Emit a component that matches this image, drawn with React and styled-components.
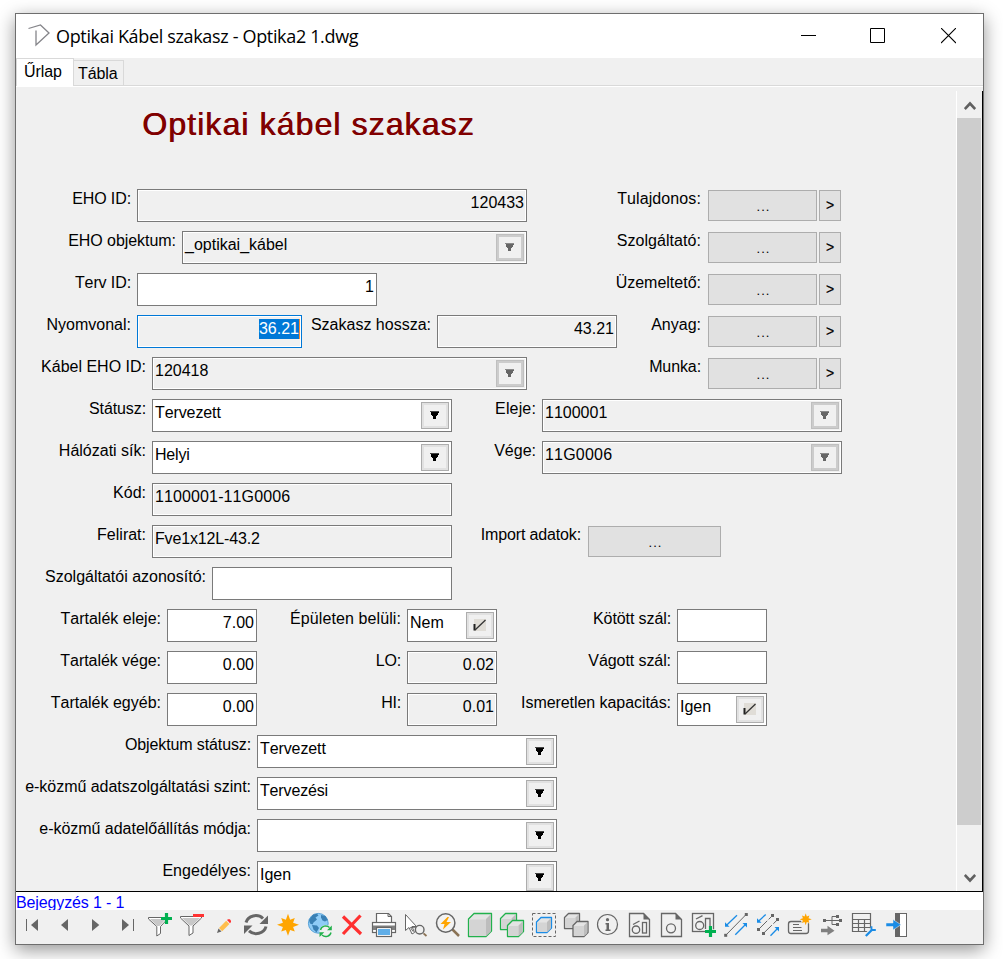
import React from 'react';
import styled, { createGlobalStyle, css } from 'styled-components';

const GlobalStyle = createGlobalStyle`
    * {
        box-sizing: border-box;
    }
    body {
        margin: 0;
        background: #fff;
        font-family: "Liberation Sans", Arial, sans-serif;
        font-size: 16px;
        font-kerning: none;
        color: #000;
        overflow: hidden;
    }
`;

const Desktop = styled.div`
    width: 1003px;
    height: 959px;
    padding: 13px 0 0 15px;
    overflow: hidden;
`;

const Window = styled.div`
    display: flex;
    flex-direction: column;
    width: 969px;
    height: 932px;
    border: 1px solid #6e6e6e;
    background: #f0f0f0;
    box-shadow: 0 5px 17px rgba(0, 0, 0, 0.42);
`;

const TitleBar = styled.div`
    display: flex;
    align-items: center;
    height: 44px;
    flex: none;
    padding-left: 11px;
    background: #fff;
`;

const WindowTitle = styled.div`
    flex: 1;
    margin-left: 5px;
    font-family: "Open Sans", "Noto Sans", sans-serif;
    font-size: 18px;
    line-height: 24px;
    letter-spacing: -0.34px;
    white-space: nowrap;
`;

const WindowButton = styled.div`
    display: flex;
    align-items: center;
    justify-content: center;
    width: 70px;
    height: 44px;
`;

const TabStrip = styled.div`
    display: flex;
    align-items: flex-end;
    height: 27px;
    flex: none;
`;

const Tab = styled.div`
    height: ${p => (p.$active ? 28 : 25)}px;
    width: ${p => (p.$active ? 58 : 50)}px;
    margin-bottom: ${p => (p.$active ? -1 : 0)}px;
    padding: ${p => (p.$active ? '4px 0 0 7px' : '4px 0 0 4px')};
    border: 1px solid #d9d9d9;
    border-bottom: 0;
    border-left-width: ${p => (p.$active ? 1 : 0)}px;
    background: ${p => (p.$active ? '#fff' : '#f0f0f0')};
    line-height: 18px;
    letter-spacing: -0.1px;
    z-index: ${p => (p.$active ? 1 : 0)};
    white-space: nowrap;
`;

const Panel = styled.div`
    display: flex;
    height: 807px;
    flex: none;
    border-top: 1px solid #d9d9d9;
    border-bottom: 1px solid #000;
    box-shadow: inset 0 1px 0 #fff;
    overflow: hidden;
`;

const Form = styled.div`
    width: 940px;
    height: 805px;
    padding-top: 17px;
    overflow: hidden;
`;

const Heading = styled.div`
    height: 86px;
    padding-left: 126px;
    font-size: 32px;
    line-height: 42px;
    letter-spacing: 1.1px;
    color: #800000;
    text-shadow: 0.7px 0 0 #800000;
`;

const Row = styled.div`
    display: flex;
    height: 33px;
    margin-bottom: 9px;
`;

const Label = styled.div`
    width: ${p => p.$w}px;
    flex: none;
    padding-top: 1px;
    padding-right: ${p => p.$pad || 6}px;
    line-height: 18px;
    letter-spacing: ${p => p.$track || 0}px;
    text-align: right;
    white-space: nowrap;
`;

const Box = styled.div`
    display: flex;
    justify-content: space-between;
    width: ${p => p.$w}px;
    height: 33px;
    flex: none;
    padding: 2px 2px 0 1px;
    border: 1px solid ${p => (p.$focused ? '#0078d7' : '#7a7a7a')};
    background: ${p => (p.$readOnly ? '#f0f0f0' : '#fff')};
    box-shadow: inset 0 0 0 1px #fff;
`;

const Value = styled.div`
    flex: 1;
    padding: 2px ${p => (p.$right ? 0 : 1)}px 0 1px;
    line-height: 18px;
    text-align: ${p => (p.$right ? 'right' : 'left')};
    letter-spacing: ${p => p.$track || 0}px;
    white-space: nowrap;
`;

const Selection = styled.span`
    display: inline-block;
    height: 20px;
    margin-top: -1px;
    margin-right: -1px;
    padding-top: 1px;
    border-right: 1px solid #ff8728;
    background: #0078d7;
    color: #fff;
`;

const FieldButton = styled.div`
    display: flex;
    align-items: center;
    justify-content: center;
    width: 28px;
    height: 27px;
    padding-bottom: 1px;
    border: 1px solid #adadad;
    box-shadow: inset 0 0 0 2px #e1e1e1;
    background: #f0f0f0;
    ${p => p.$disabled && css`
        border-color: #bfbfbf;
        box-shadow: inset 0 0 0 2px #cccccc;
    `}
`;

const PushButton = styled.div`
    width: ${p => p.$w}px;
    height: 31px;
    flex: none;
    margin-top: 1px;
    padding-left: 2px;
    border: 1px solid #adadad;
    background: #e1e1e1;
    font-size: 13px;
    line-height: 32px;
    letter-spacing: 1px;
    text-align: center;
`;

const GoButton = styled(PushButton)`
    margin-left: 2px;
    padding-left: 0;
    font-size: 14px;
    line-height: 29px;
    letter-spacing: 0;
    -webkit-text-stroke: 0.2px #000;
`;

const ScrollBar = styled.div`
    display: flex;
    flex-direction: column;
    align-items: flex-start;
    width: 27px;
    height: 800px;
    margin-top: 5px;
    border-left: 1px solid #fff;
    border-right: 1px solid #000;
`;

const ScrollArrow = styled.div`
    display: flex;
    align-items: center;
    justify-content: center;
    width: 25px;
    height: 27px;
    flex: none;
    padding-top: 2px;
`;

const ScrollThumb = styled.div`
    width: 24px;
    height: 707px;
    margin-bottom: 38px;
    background: #cdcdcd;
`;

const StatusLine = styled.div`
    height: 18px;
    flex: none;
    overflow: hidden;
    background: #fff;
    color: #0000ff;
    line-height: 21px;
    letter-spacing: -0.13px;
    white-space: nowrap;
`;

const Toolbar = styled.div`
    display: flex;
    height: 34px;
    flex: none;
`;

const ToolIcon = styled.svg`
    width: 32px;
    height: 34px;
    flex: none;
    fill: none;
    stroke: #666;
    stroke-width: 1;
`;

const rows = [
    [
        { label: 'EHO ID:', lw: 121, w: 390, value: '120433', right: true, ro: true, track: -0.1 },
        { label: 'Tulajdonos:', lw: 181, link: true, track: 0.1 },
    ],
    [
        { label: 'EHO objektum:', lw: 166, w: 345, value: '_optikai_kábel', ro: true, button: 'arrow', track: -0.05 },
        { label: 'Szolgáltató:', lw: 181, link: true, track: 0.05 },
    ],
    [
        { label: 'Terv ID:', lw: 121, w: 240, value: '1', right: true, track: -0.1 },
        { label: 'Üzemeltető:', lw: 331, link: true },
    ],
    [
        { label: 'Nyomvonal:', lw: 121, w: 165, value: '36.21', right: true, ro: true, focused: true },
        { label: 'Szakasz hossza:', lw: 135, w: 180, value: '43.21', right: true, ro: true },
        { label: 'Anyag:', lw: 91, link: true },
    ],
    [
        { label: 'Kábel EHO ID:', lw: 136, w: 375, value: '120418', ro: true, button: 'arrow' },
        { label: 'Munka:', lw: 181, link: true, track: -0.1 },
    ],
    [
        { label: 'Státusz:', lw: 136, w: 300, value: 'Tervezett', button: 'arrow', track: -0.1, vtrack: -0.1 },
        { label: 'Eleje:', lw: 90, w: 300, value: '1100001', ro: true, button: 'arrow', track: 0.15 },
    ],
    [
        { label: 'Hálózati sík:', lw: 136, w: 300, value: 'Helyi', button: 'arrow', vtrack: -0.2 },
        { label: 'Vége:', lw: 90, w: 300, value: '11G0006', ro: true, button: 'arrow', vtrack: 0.2 },
    ],
    [{ label: 'Kód:', lw: 136, w: 300, value: '1100001-11G0006', ro: true, vtrack: 0.12 }],
    [
        { label: 'Felirat:', lw: 136, w: 300, value: 'Fve1x12L-43.2', ro: true, vtrack: -0.15 },
        { label: 'Import adatok:', lw: 136, push: 133, track: -0.15 },
    ],
    [{ label: 'Szolgáltatói azonosító:', lw: 196, w: 240, value: '' }],
    [
        { label: 'Tartalék eleje:', lw: 151, w: 90, value: '7.00', right: true },
        { label: 'Épületen belüli:', lw: 150, w: 90, value: 'Nem', button: 'check', track: 0.1 },
        { label: 'Kötött szál:', lw: 180, w: 90, value: '', track: -0.1 },
    ],
    [
        { label: 'Tartalék vége:', lw: 151, w: 90, value: '0.00', right: true, track: -0.05 },
        { label: 'LO:', lw: 150, w: 90, value: '0.02', right: true, ro: true, track: -0.2 },
        { label: 'Vágott szál:', lw: 180, w: 90, value: '', track: -0.08 },
    ],
    [
        { label: 'Tartalék egyéb:', lw: 151, w: 90, value: '0.00', right: true },
        { label: 'HI:', lw: 150, w: 90, value: '0.01', right: true, ro: true, track: -0.2 },
        { label: 'Ismeretlen kapacitás:', lw: 180, w: 90, value: 'Igen', button: 'check', track: -0.06 },
    ],
    [{ label: 'Objektum státusz:', lw: 241, w: 300, value: 'Tervezett', button: 'arrow', track: -0.12, vtrack: -0.1 }],
    [{ label: 'e-közmű adatszolgáltatási szint:', lw: 241, w: 300, value: 'Tervezési', button: 'arrow', track: -0.03, vtrack: -0.15 }],
    [{ label: 'e-közmű adatelőállítás módja:', lw: 241, w: 300, value: '', button: 'arrow', track: -0.03 }],
    [{ label: 'Engedélyes:', lw: 241, w: 300, value: 'Igen', button: 'arrow', track: 0.05 }],
];

const ArrowGlyph = ({ disabled }) => (
    <svg width="10" height="8" viewBox="0 0 10 8" shapeRendering="crispEdges">
        <path d="M0 0h9v1h-9z" fill={disabled ? '#8a8a8a' : '#444'} />
        <path d="M0.500 1h8v1h-8z M1 2h7v2h-7z M2 4h5v1h-5z M3 5h3v3h-3z" fill={disabled ? '#666' : '#000'} />
    </svg>
);

const CheckGlyph = () => (
    <svg width="14" height="14" viewBox="0 0 14 14">
        <rect x="1" y="1" width="12" height="12" fill="#e0ddd7" />
        <path d="M1.5 6v6.5" stroke="#222" strokeWidth="2" />
        <path d="M2 12L12.500 2" stroke="#333" strokeWidth="1.3" />
    </svg>
);

const Field = ({ field }) => {
    const { label, lw, track, link, push, w, value, vtrack, right, ro, focused, button } = field;

    return (
        <>
            <Label $w={lw} $pad={link || push ? 7 : 6} $track={track}>{label}</Label>
            {link && (
                <>
                    <PushButton $w={109}>...</PushButton>
                    <GoButton $w={22}>&gt;</GoButton>
                </>
            )}
            {push && <PushButton $w={push}>...</PushButton>}
            {w && (
                <Box $w={w} $readOnly={ro} $focused={focused}>
                    <Value $right={right} $track={vtrack}>
                        {focused ? <Selection>{value}</Selection> : value}
                    </Value>
                    {button && (
                        <FieldButton $disabled={ro}>
                            {button === 'arrow' ? <ArrowGlyph disabled={ro} /> : <CheckGlyph />}
                        </FieldButton>
                    )}
                </Box>
            )}
        </>
    );
};

// a box seen from the front left, s = overall size, d = depth of the side
const Cube = ({ x, y, s, d, stroke }) => (
    <g stroke={stroke} strokeLinejoin="round">
        <path
            d={`M${x} ${y + d}l${d} ${-d}h${s - d}v${s - d}l${-d} ${d}h${d - s}z`}
            fill="#e4e4e4"
            strokeWidth="1.3"
        />
        <path d={`M${x + 1} ${y + d + 0.5}h${s - d - 1}v${s - d - 1}h${d - s + 1}z`} fill="#d4d4d4" stroke="none" />
        <path d={`M${x + s - d} ${y + d}l${d - 0.7} ${0.7 - d}v${s - d}l${0.7 - d} ${d - 0.9}z`} fill="#bdbdbd" stroke="none" />
    </g>
);

const Burst = ({ cx, cy, r }) => {
    const points = [];
    for (let i = 0; i < 16; i++) {
        const a = (i * Math.PI) / 8;
        const len = i % 2 ? r * 0.5 : i % 4 ? r * 0.88 : r;
        points.push(`${(cx + len * Math.sin(a)).toFixed(1)},${(cy - len * Math.cos(a)).toFixed(1)}`);
    }
    return <polygon points={points.join(' ')} fill="#ffa500" stroke="none" />;
};

const Dot = ({ x, y }) => <rect x={x - 1.5} y={y - 1.5} width="3" height="3" fill="#666" stroke="none" />;

const BlueArrow = ({ x1, y1, x2, y2 }) => {
    const s = x2 < x1 ? 1 : -1;
    return (
        <g stroke="#1a8ce6" fill="#1a8ce6">
            <path d={`M${x1} ${y1}L${x2 + s} ${y2 - s}`} strokeWidth="1.3" />
            <path d={`M${x2} ${y2}v${-4.5 * s}l${4.5 * s} ${4.5 * s}z`} stroke="none" />
        </g>
    );
};

const Page = () => (
    <>
        <path d="M5.5 3.5h14l6 6v17h-20z" strokeWidth="1.3" />
        <path d="M19.5 3v6.5h6.5z" fill="#666" stroke="none" />
    </>
);

const tools = [
    <><path d="M10.5 9v12" /><path d="M22 9v12l-7-6z" fill="#666" stroke="none" /></>,
    <path d="M20 9v12l-7-6z" fill="#666" stroke="none" />,
    <path d="M12 9v12l7.3-6z" fill="#666" stroke="none" />,
    <><path d="M21.5 9v12" /><path d="M10 9v12l7-6z" fill="#666" stroke="none" /></>,
    <>
        <path d="M4.5 7.5h19v1.5l-7 7.5v7l-3.7 2.5v-9.5l-8.3-7.5z" fill="#fff" />
        <path d="M6 9h16l-6.5 7h-2.5z" fill="#c8c8c8" stroke="none" />
        <path d="M22.5 3v11M17 8.5h11" stroke="#00b050" strokeWidth="3.2" />
    </>,
    <>
        <path d="M4.5 6.5h21v1.5l-8.5 8v7l-4 2.5v-9.5l-8.5-8z" fill="#fff" />
        <path d="M6 8h18l-7.5 7.5h-3z" fill="#c8c8c8" stroke="none" />
        <path d="M17 5.5h11" stroke="#ff3333" strokeWidth="3" />
    </>,
    <g stroke="none">
        <path d="M9 23l1.5-4.5 3 3z" fill="#666" />
        <path d="M11 18l7.2-7.2 3.2 3.2-7.2 7.2z" fill="#ffbe4d" />
        <path d="M19 10l1-.8h1.8l1.2 1.4v1.4l-1 1.2z" fill="#f33" />
    </g>,
    <>
        <path d="M6 12.5a10 9 0 0 1 17-4" strokeWidth="3" />
        <path d="M28 5.5v8.5h-8.5z" fill="#666" stroke="none" />
        <path d="M26 16.5a10 9 0 0 1-17 4.3" strokeWidth="3" />
        <path d="M4 24v-8.5h8.5z" fill="#666" stroke="none" />
    </>,
    <Burst cx={16} cy={14.8} r={11} />,
    <>
        <circle cx="14.3" cy="13.3" r="9.9" fill="#8fccf7" stroke="#4a9ad4" strokeWidth=".9" />
        <g fill="#3a80b4" stroke="none">
            <path d="M5 10l4-5.5 4-.8 1.5 1.8-3 2 1.5 2-3.5 3-1 2-2.5-1z" />
            <path d="M17 5l4.5 1 2.3 4-2.8 1.5-2.5-1-1.5-3z" />
            <path d="M8 15l5 .5 2 2.5-2.5 4.5-3-3z" />
        </g>
        <circle cx="21.7" cy="21.2" r="6.2" fill="#f0f0f0" stroke="none" />
        <path d="M16.5 20a5.3 5 0 0 1 9-2.5M27 22.5a5.3 5 0 0 1-9 2.5" stroke="#22b14c" strokeWidth="1.4" />
        <path d="M27.8 15.5v4.8h-4.8zM15.5 27v-4.8h4.8z" fill="#22b14c" stroke="none" />
    </>,
    <path d="M7 6.5l18 17.5M24.5 5.5l-17.5 18.5" stroke="#ff3030" strokeWidth="3.2" />,
    <>
        <path d="M8.5 12.5v-9h12l3 3v6" fill="#fff" strokeWidth="1.2" />
        <path d="M20 3v3.5h4" />
        <rect x="4.5" y="12.5" width="23" height="10" fill="#fff" strokeWidth="1.2" />
        <rect x="5" y="15.5" width="22" height="4.5" fill="#808080" stroke="none" />
        <rect x="8.5" y="17.5" width="15" height="9" fill="#fff" strokeWidth="1.2" />
        <rect x="10" y="19" width="12" height="6" fill="#60aee8" stroke="none" />
    </>,
    <>
        <path d="M5.5 4.5v16l3.5-3 3 6.5 2.5-1.5-2.5-6h4.5z" fill="#fff" />
        <path d="M13 21.5l-2.5-4 6.5-.5" />
        <circle cx="19.7" cy="19.7" r="4.3" fill="#f0f0f0" strokeWidth="1.4" />
        <path d="M23.5 23.3l3 2.7" stroke="#8b7355" strokeWidth="1.8" />
    </>,
    <>
        <path d="M20.5 19.5l6.5 6.5" stroke="#8b7355" strokeWidth="2.5" />
        <circle cx="13.7" cy="13" r="9.2" fill="#f3f3f3" strokeWidth="1.5" />
        <path d="M15.5 7l-7 7h4l-1.5 5.5 8-7.5h-4.5l2.5-5z" fill="#ffa500" stroke="none" />
    </>,
    <Cube x={4.5} y={3.5} s={23} d={5.5} stroke="#22b14c" />,
    <>
        <Cube x={4.5} y={3.5} s={16} d={5} stroke="#22b14c" />
        <Cube x={11.5} y={10.5} s={16} d={5} stroke="#22b14c" />
    </>,
    <>
        <rect x="4.5" y="3.5" width="23" height="23" strokeDasharray="3 2" />
        <Cube x={8.5} y={7.5} s={15} d={4.5} stroke="#1a8ce6" />
    </>,
    <>
        <Cube x={4.5} y={3.5} s={15} d={4} stroke="#666" />
        <Cube x={13} y={11.5} s={15} d={4} stroke="#666" />
    </>,
    <>
        <circle cx="15.5" cy="14.5" r="10" strokeWidth="1.2" />
        <path d="M13.5 13h3.5v6.5h1.5v1.5h-5v-1.5h1v-5h-1z" fill="#666" stroke="none" />
        <circle cx="15.5" cy="9.7" r="1.6" fill="#666" stroke="none" />
    </>,
    <>
        <Page />
        <path d="M9 14.5l6.5-3.5" strokeWidth="1.3" />
        <circle cx="12" cy="19.7" r="3.7" strokeWidth="1.3" />
        <rect x="18.5" y="12.5" width="4" height="10.5" strokeWidth="1.3" />
    </>,
    <>
        <Page />
        <circle cx="15" cy="18.3" r="4.5" strokeWidth="1.3" />
    </>,
    <>
        <rect x="4.5" y="3.5" width="21" height="18" strokeWidth="1.3" />
        <path d="M8 9l6.5-3.3" strokeWidth="1.3" />
        <circle cx="11.7" cy="15.5" r="4" strokeWidth="1.3" />
        <path d="M17.5 19v-10.5h4.5v10" strokeWidth="1.3" />
        <path d="M22.5 16v11M17 21.5h11" stroke="#f0f0f0" strokeWidth="4.5" />
        <path d="M22.5 16v11M17 21.5h11" stroke="#00b050" strokeWidth="3.2" />
    </>,
    <>
        <path d="M5.7 25.3L26.3 4.3" />
        <Dot x={5.7} y={25.3} /><Dot x={26.3} y={4.5} />
        <BlueArrow x1={17} y1={5.3} x2={5} y2={16.7} />
        <BlueArrow x1={15.3} y1={24.7} x2={27} y2={13} />
    </>,
    <>
        <path d="M6.7 19.3L20.7 5.3M11.3 23.5L25.7 9.5" strokeDasharray="12 2" />
        <Dot x={20.5} y={5.5} /><Dot x={25.5} y={9.5} /><Dot x={6.5} y={19.5} /><Dot x={11.5} y={23.5} />
        <BlueArrow x1={13.7} y1={4.5} x2={5} y2={12.7} />
        <BlueArrow x1={18.5} y1={25.7} x2={27} y2={17} />
    </>,
    <>
        <rect x="4.5" y="11.5" width="20" height="12" rx="2.5" strokeWidth="1.3" />
        <path d="M9 14.5h6M9 17.5h8.5M9 20.5h9" />
        <circle cx="21.7" cy="9.3" r="5" fill="#f0f0f0" stroke="none" />
        <Burst cx={21.7} cy={9.3} r={6} />
    </>,
    <>
        <path d="M8 10.5h16M21 6.5h-5v8h5" />
        <Dot x={8.5} y={10.5} /><Dot x={21.5} y={6.5} /><Dot x={24.5} y={10.5} /><Dot x={21.5} y={14.5} />
        <path d="M5 18.7h6.5v-3l7 5-7 4.5v-3h-6.5z" fill="#808080" stroke="none" />
    </>,
    <>
        <path d="M4.5 3.5h18v18h-18zM4.5 9.5h18M4.5 13.5h18M4.5 17.5h18M10.5 9.5v12M16.5 9.5v12" strokeWidth="1.2" />
        <path d="M18 26l7-7" stroke="#f0f0f0" strokeWidth="5" />
        <path d="M17.8 26l6-6" stroke="#1a8ce6" strokeWidth="2.3" />
        <path d="M23.5 16.3v3.7h4.3" stroke="#1a8ce6" strokeWidth="1.8" />
    </>,
    <>
        <rect x="15.5" y="3.5" width="11" height="23" fill="#fff" />
        <rect x="15" y="3" width="5" height="24" fill="#666" stroke="none" />
        <path d="M6 13h7v-3.5l8 5.2-8 5.3v-3.5h-7z" fill="#1a8ce6" stroke="#f0f0f0" strokeWidth=".5" />
    </>,
];

const App = () => (
    <>
        <GlobalStyle />
        <Desktop>
            <Window>
                <TitleBar>
                    <svg width="24" height="24" viewBox="0 0 24 24" fill="none" stroke="#85858a" strokeWidth="1.3">
                        <path d="M1.5 4.5l12-3.500 8.500 8-13 12v-14.500" />
                    </svg>
                    <WindowTitle>Optikai Kábel szakasz - Optika2 1.dwg</WindowTitle>
                    <WindowButton>
                        <svg width="15" height="16" viewBox="0 0 15 16"><path d="M0 7.5h15" stroke="#000" /></svg>
                    </WindowButton>
                    <WindowButton>
                        <svg width="16" height="16" viewBox="0 0 16 16">
                            <path d="M.5.5h14v14h-14z" fill="none" stroke="#000" />
                        </svg>
                    </WindowButton>
                    <WindowButton>
                        <svg width="15" height="16" viewBox="0 0 15 16">
                            <path d="M0 0l15 15M15 0l-15 15" stroke="#000" strokeWidth="1.1" />
                        </svg>
                    </WindowButton>
                </TitleBar>
                <TabStrip>
                    <Tab $active>Űrlap</Tab>
                    <Tab>Tábla</Tab>
                </TabStrip>
                <Panel>
                    <Form>
                        <Heading>Optikai kábel szakasz</Heading>
                        {rows.map((fields, i) => (
                            <Row key={i}>
                                {fields.map(field => <Field key={field.label} field={field} />)}
                            </Row>
                        ))}
                    </Form>
                    <ScrollBar>
                        <ScrollArrow>
                            <svg width="12" height="10" viewBox="0 0 12 10">
                                <path d="M.8 8L6 2.5l5.2 5.5" fill="none" stroke="#606060" strokeWidth="2.6" />
                            </svg>
                        </ScrollArrow>
                        <ScrollThumb />
                        <ScrollArrow>
                            <svg width="12" height="10" viewBox="0 0 12 10">
                                <path d="M.8 2L6 7.5l5.2-5.5" fill="none" stroke="#606060" strokeWidth="2.6" />
                            </svg>
                        </ScrollArrow>
                    </ScrollBar>
                </Panel>
                <StatusLine>Bejegyzés 1 - 1</StatusLine>
                <Toolbar>
                    {tools.map((icon, i) => (
                        <ToolIcon key={i} viewBox="0 0 32 34">{icon}</ToolIcon>
                    ))}
                </Toolbar>
            </Window>
        </Desktop>
    </>
);

export default App;
